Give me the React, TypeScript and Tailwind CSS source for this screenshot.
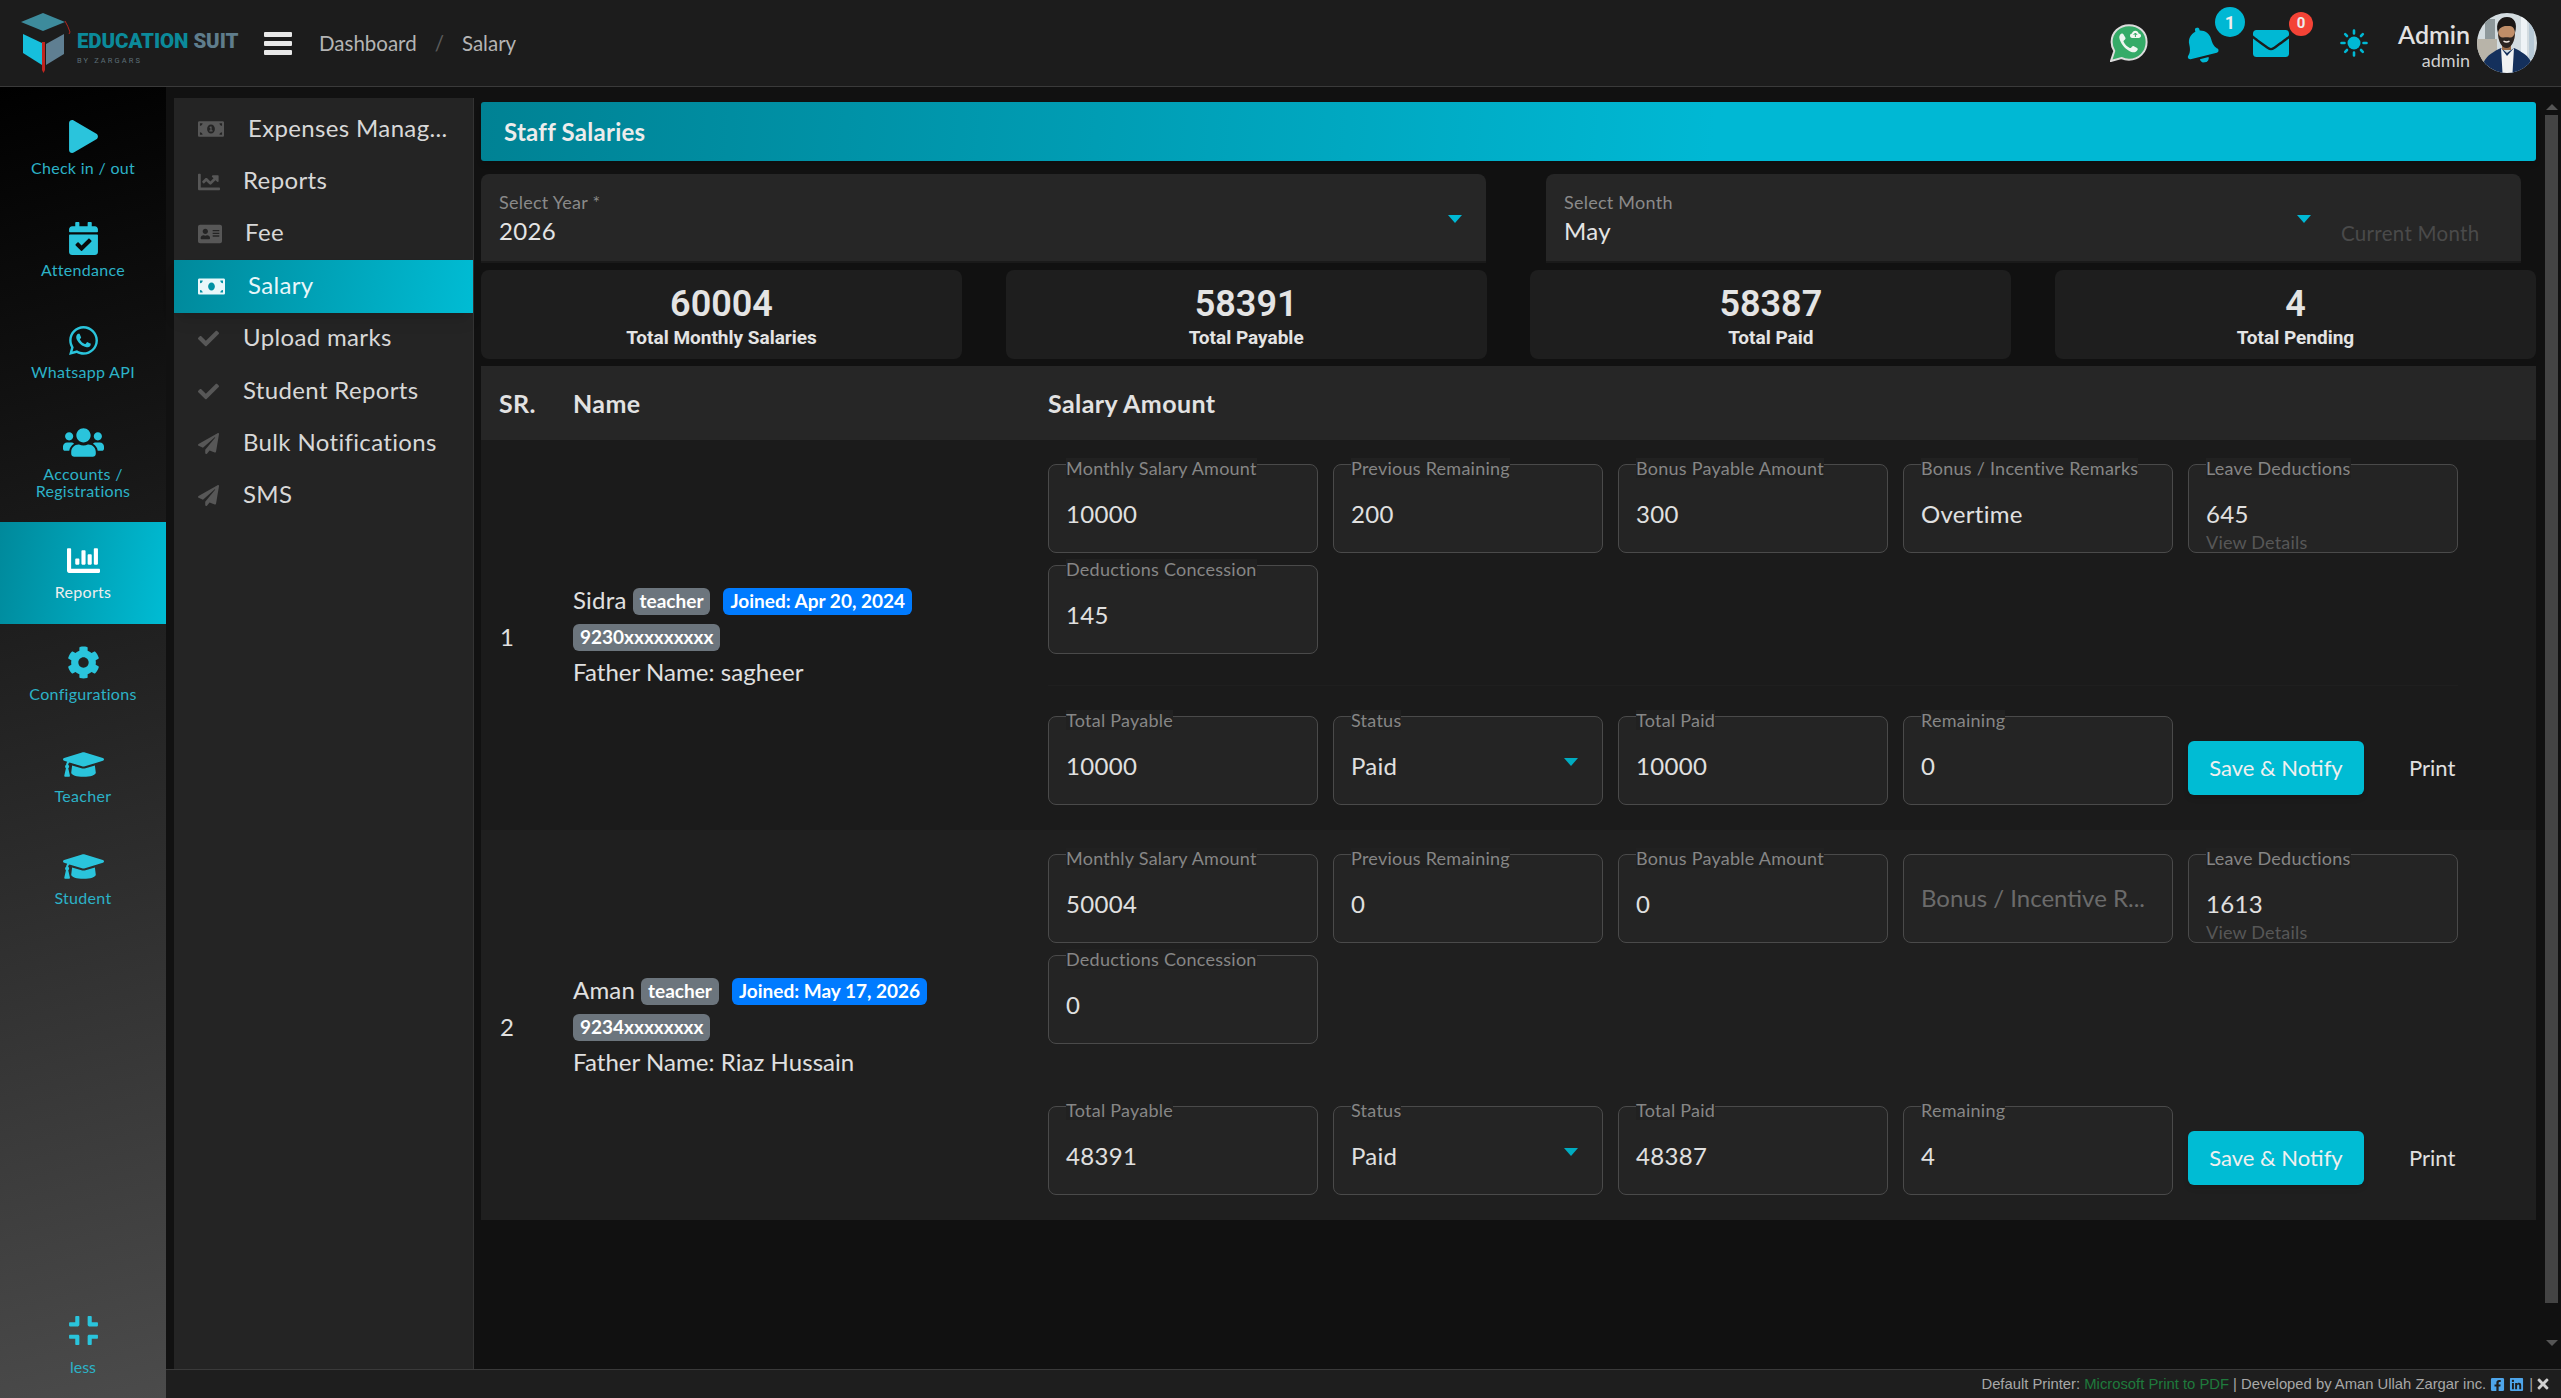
import React from "react";
import {
  FaPlay, FaCalendarCheck, FaWhatsapp, FaUsers, FaChartBar, FaCog, FaGraduationCap, FaCompress,
  FaMoneyBillAlt, FaChartLine, FaAddressCard, FaMoneyBill, FaCheck, FaPaperPlane, FaBell, FaEnvelope,
  FaFacebookSquare, FaLinkedin, FaTimes,
} from "react-icons/fa";

const Logo = () => (
  <svg width="50" height="60" viewBox="0 0 50 60" className="shrink-0">
    <path d="M0 9 L22 0 L44 9 L22 18 Z" fill="#3d8b9c" />
    <path d="M44 8 Q47 13 49 19 L48 21" stroke="#b5261e" strokeWidth="1" fill="none" />
    <path d="M2 21 L21 30 L21 52 L2 40 Z" fill="#16bfdc" />
    <path d="M25 31 L43 21 L43 41 L25 52 Z" fill="#5f7f92" />
    <path d="M21 29 L24 29 L24 57 L22.500 60 L21 57 Z" fill="#c0241f" />
  </svg>
);

const Sun = () => (
  <svg width="28" height="28" viewBox="0 0 28 28" fill="#00b8d4">
    <circle cx="14" cy="14" r="6.5" />
    <g stroke="#00b8d4" strokeWidth="2.6" strokeLinecap="round">
      <path d="M14 1.5V4.5M14 23.5V26.5M1.5 14H4.5M23.5 14H26.5M5.2 5.2L7 7M21 21L22.8 22.8M5.2 22.8L7 21M21 7L22.8 5.2" />
    </g>
  </svg>
);

const Whats = () => (
  <svg width="38" height="38" viewBox="0 0 38 38">
    <path d="M19 1.2C9.2 1.2 1.6 8.6 1.6 18c0 3.3 1 6.4 2.7 9L1 37l10.4-3c2.3 1.1 4.8 1.7 7.6 1.7 9.8 0 17.6-7.6 17.6-17.7S28.8 1.2 19 1.2Z" fill="#35ab68" stroke="#dcdcdc" strokeWidth="2" />
    <path d="M11.5 9.5c-2 1.3-2.7 3.3-1.8 6 2 5.6 6 10 11.6 12.4 2.6 1 4.8.4 6.2-1.8.5-.8.3-1.5-.4-2l-3.2-1.9c-.7-.4-1.3-.3-1.8.3l-1 1.2c-.4.4-.8.5-1.3.2-2.8-1.4-4.8-3.4-6.2-6.2-.2-.5-.1-.9.3-1.3l1.1-1c.6-.5.7-1.1.3-1.8l-1.9-3.4c-.5-.7-1.2-.9-1.9-.5Z" fill="#eef5f0" />
    <path d="M20 11.5c0-1.3 1-2.1 2-2.1.4-1.6 1.7-2.6 3.2-2.6 1.8 0 3.2 1.2 3.5 2.8 1.3.1 2.3 1 2.3 2.2 0 1.3-1 2.2-2.3 2.2h-6.5c-1.4 0-2.2-1-2.2-2.5Z" fill="#f2f7f3" />
    <path d="M25.4 9v4M23.6 11l1.8-2 1.8 2" stroke="#35ab68" strokeWidth="1" fill="none" />
  </svg>
);

const Avatar = () => (
  <svg width="60" height="60" viewBox="0 0 60 60" className="rounded-full shrink-0">
    <rect width="60" height="60" fill="#d3dce0" />
    <rect x="0" y="26" width="20" height="34" fill="#b8b4a9" />
    <rect x="8" y="6" width="10" height="20" fill="#8e999c" />
    <rect x="44" y="0" width="6" height="46" fill="#eef3f6" />
    <rect x="52" y="0" width="5" height="46" fill="#b7c9d6" />
    <path d="M5 60C5 48 9 42 24 35L30 40L37 35C52 42 56 48 56 60Z" fill="#14305c" />
    <path d="M24 35L30 43L37 35L35.500 60H25.500Z" fill="#f0f2f3" />
    <rect x="25" y="28" width="9" height="9" fill="#9a6d4a" />
    <ellipse cx="29.500" cy="20" rx="8.500" ry="13" fill="#c08e68" />
    <path d="M21 19C21 29 25 35 29.500 35C34 35 38 29 38 19C37 23.500 35 25 32.500 24.500C30.500 24 28.500 24 26.500 24.500C24 25 22 23.500 21 19Z" fill="#2b2420" />
    <path d="M26.500 28.200C28.500 29.300 30.500 29.300 32.500 28.200" stroke="#efe7e0" strokeWidth="1.400" fill="none" />
    <path d="M21 20C18 10 23 4 30 4C37 4 41 10 38 20C37.500 14 35 12.500 29.500 13C25 13 22 15 21 20Z" fill="#1b1715" />
  </svg>
);

const sideItems = [
  { label: "Check in / out", icon: <FaPlay size={33} />, h: "h-[102px]" },
  { label: "Attendance", icon: <FaCalendarCheck size={33} />, h: "h-[102px]" },
  { label: "Whatsapp API", icon: <FaWhatsapp size={33} />, h: "h-[102px]" },
  { label: "Accounts /\nRegistrations", icon: <FaUsers size={41} />, h: "h-[118px]" },
  { label: "Reports", icon: <FaChartBar size={33} />, h: "h-[102px]", active: true },
  { label: "Configurations", icon: <FaCog size={33} />, h: "h-[102px]" },
  { label: "Teacher", icon: <FaGraduationCap size={41} />, h: "h-[102px]" },
  { label: "Student", icon: <FaGraduationCap size={41} />, h: "h-[102px]" },
];

const subItems = [
  { label: "Expenses Manag...", icon: <FaMoneyBillAlt size={26} />, w: "w-[50px]" },
  { label: "Reports", icon: <FaChartLine size={22} />, w: "w-[45px]" },
  { label: "Fee", icon: <FaAddressCard size={24} />, w: "w-[47px]" },
  { label: "Salary", icon: <FaMoneyBill size={27} />, w: "w-[50px]", active: true },
  { label: "Upload marks", icon: <FaCheck size={21} />, w: "w-[45px]" },
  { label: "Student Reports", icon: <FaCheck size={21} />, w: "w-[45px]" },
  { label: "Bulk Notifications", icon: <FaPaperPlane size={21} />, w: "w-[45px]" },
  { label: "SMS", icon: <FaPaperPlane size={21} />, w: "w-[45px]" },
];

const Field = ({ label, value, muted, select, details }: { label: string; value: string; muted?: boolean; select?: boolean; details?: boolean }) => (
  <div className="relative h-[89px] rounded-lg border border-[#4a4a4a] bg-[#242424] pl-[17px] flex">
    <span className="absolute left-[17px] top-[-7px] h-[20px] bg-[#212121] text-[18px] leading-[20px] text-[#868686] whitespace-nowrap tracking-[0.25px]">{label}</span>
    {muted ? (
      <span className="mt-[27px] text-[24px] leading-[32px] text-[#6b6b6b]">{value}</span>
    ) : (
      <span className="mt-[33px] text-[24px] leading-[32px] text-[#e0e0e0] tracking-[0.3px]">{value}</span>
    )}
    {select && <span className="absolute right-[24px] top-[41px] w-0 h-0 border-l-[7px] border-r-[7px] border-t-[8px] border-l-transparent border-r-transparent border-t-[#00acc1]" />}
    {details && <span className="absolute left-[17px] bottom-[-1px] text-[18px] leading-[22px] text-[#575757] tracking-[0.2px]">View Details</span>}
  </div>
);

const Badge = ({ text, color, extra }: { text: string; color: string; extra?: string }) => (
  <span className={`inline-flex h-[27px] items-center rounded-md px-[7px] text-[19px] font-bold text-white whitespace-nowrap ${color} ${extra ?? ""}`}>{text}</span>
);

const Row = ({ sr, name, joined, phone, father, f, bg }: { sr: string; name: string; joined: string; phone: string; father: string; f: string[]; bg: string }) => (
  <div className={`flex h-[390px] ${bg}`}>
    <div className="w-[92px] pl-[19px] flex items-center text-[24px] text-[#e0e0e0] pt-[4px]">{sr}</div>
    <div className="w-[475px] flex flex-col justify-center pt-[6px] text-[24px] text-[#e0e0e0]">
      <div className="flex items-center h-[27px]">
        <span className="mr-[6px] pb-[3px] tracking-[0.2px]">{name}</span>
        <Badge text="teacher" color="bg-[#6c757d]" />
        <Badge text={joined} color="bg-[#007bff]" extra="ml-[13px]" />
      </div>
      <div className="flex mt-[9px]"><Badge text={phone} color="bg-[#6c757d]" /></div>
      <div className="mt-[5px] leading-[32px] tracking-[0.05px]">Father Name: {father}</div>
    </div>
    <div className="flex-1 pt-[24px] pr-[78.5px]">
      <div className="grid grid-cols-5 gap-x-[15.5px] gap-y-[12px] pb-[31px] border-b border-[#1f1f1f]">
        <Field label="Monthly Salary Amount" value={f[0]} />
        <Field label="Previous Remaining" value={f[1]} />
        <Field label="Bonus Payable Amount" value={f[2]} />
        {f[3] === "" ? <Field label="" value="Bonus / Incentive R..." muted /> : <Field label="Bonus / Incentive Remarks" value={f[3]} />}
        <Field label="Leave Deductions" value={f[4]} details />
        <Field label="Deductions Concession" value={f[5]} />
      </div>
      <div className="grid grid-cols-5 gap-x-[15.5px] pt-[30px]">
        <Field label="Total Payable" value={f[6]} />
        <Field label="Status" value="Paid" select />
        <Field label="Total Paid" value={f[7]} />
        <Field label="Remaining" value={f[8]} />
        <div className="flex items-center mt-[25px] h-[54px]">
          <button className="w-[176px] h-[54px] pb-[2px] rounded-md bg-[#00bcd4] text-[22px] text-[#f0f0f0] shadow-md">Save &amp; Notify</button>
          <span className="ml-[45px] pb-[2px] text-[22px] text-[#e0e0e0]">Print</span>
        </div>
      </div>
    </div>
  </div>
);

const Stat = ({ n, label }: { n: string; label: string }) => (
  <div className="w-[481px] h-[89px] rounded-lg bg-[#1e1e1e] flex flex-col items-center [font-family:Roboto,sans-serif] text-[#e4e4e4]">
    <span className="mt-[14px] text-[36px] leading-[40px] font-semibold">{n}</span>
    <span className="mt-[2px] text-[19px] leading-[24px] font-bold">{label}</span>
  </div>
);

const SelectCard = ({ w, label, value, caretGap, children }: { w: string; label: string; value: string; caretGap: string; children?: React.ReactNode }) => (
  <div className={`${w} h-[89px] rounded-t-lg bg-[#262626] border-b-[2px] border-[#1a1a1a] flex pl-[18px]`}>
    <div className="flex flex-col flex-1">
      <span className="mt-[17px] text-[18px] leading-[22px] text-[#8a8a8a] tracking-[0.25px]">{label}</span>
      <span className="mt-[2px] text-[24px] leading-[32px] text-[#e4e4e4] tracking-[0.3px]">{value}</span>
    </div>
    <span className={`mt-[41px] w-0 h-0 border-l-[7px] border-r-[7px] border-t-[8px] border-l-transparent border-r-transparent border-t-[#00b8d4] ${caretGap}`} />
    {children}
  </div>
);

export default function App() {
  return (
    <div className="h-screen w-full flex flex-col overflow-hidden bg-[#111111] [font-family:Lato,sans-serif]">
      <header className="h-[87px] shrink-0 flex items-center bg-[#1c1c1c] border-b border-[#3a3a3a] pl-[21px]">
        <Logo />
        <div className="ml-[6px] w-[187px] flex flex-col [font-family:Roboto,sans-serif] pt-[9px]">
          <span className="text-[20.5px] leading-[24px] font-black whitespace-nowrap tracking-[-0.1px]"><span className="text-[#0b8a9a]">EDUCATION</span> <span className="text-[#5f7d8c]">SUIT</span></span>
          <span className="text-[7.5px] leading-[10px] tracking-[2.1px] text-[#5d6f78] mt-[3px]">BY ZARGARS</span>
        </div>
        <div className="w-[28px] flex flex-col gap-[4px]">
          <span className="h-[5px] rounded-[1px] bg-[#e8e8e8]" />
          <span className="h-[5px] rounded-[1px] bg-[#e8e8e8]" />
          <span className="h-[5px] rounded-[1px] bg-[#e8e8e8]" />
        </div>
        <nav className="ml-[27px] flex items-center text-[20.5px] text-[#b4b4b4]">
          <span>Dashboard</span>
          <span className="ml-[18px] text-[#5c5c5c]">/</span>
          <span className="ml-[18px]">Salary</span>
        </nav>
        <div className="ml-auto flex items-center pr-[24px]">
          <Whats />
          <div className="relative ml-[35px] w-[32px] h-[36px] mt-[4px] text-[#00b8d4]">
            <FaBell size={36} className="-rotate-[14deg]" />
            <span className="absolute left-[32px] top-[-20px] w-[30px] h-[30px] rounded-full bg-[#00b8d4] flex items-center justify-center text-[18px] font-bold text-[#eeeeee] [font-family:Roboto,sans-serif]">1</span>
          </div>
          <div className="relative ml-[38px] w-[36px] text-[#00b8d4] flex">
            <FaEnvelope size={37} />
            <span className="absolute left-[36px] top-[-13px] w-[24px] h-[24px] rounded-full bg-[#f44336] flex items-center justify-center text-[15px] font-bold text-[#eeeeee] [font-family:Roboto,sans-serif]">0</span>
          </div>
          <div className="ml-[51px]"><Sun /></div>
          <div className="ml-[30px] flex flex-col items-end mr-[7px]">
            <span className="mt-[3px] text-[25px] leading-[30px] font-semibold text-[#e2e2e2]">Admin</span>
            <span className="text-[18px] leading-[22px] text-[#d0d0d0]">admin</span>
          </div>
          <Avatar />
        </div>
      </header>

      <div className="flex-1 flex min-h-0">
        <aside className="w-[166px] shrink-0 flex flex-col pt-[11px] bg-[linear-gradient(165deg,#000000,#4b4b4b)]">
          {sideItems.map((s) => (
            <div key={s.label} className={`${s.h} flex flex-col items-center pt-[22px] ${s.active ? "bg-[linear-gradient(100deg,#00899b,#00bcd4)] text-white" : "text-[#2ac4dc]"}`}>
              <div className="h-[33px] flex items-center justify-center">{s.icon}</div>
              <span className={`mt-[6px] text-[16px] leading-[17px] text-center whitespace-pre-line tracking-[0.3px] ${s.active ? "text-[#eeeeee]" : "text-[#2cb2c7]"}`}>{s.label}</span>
            </div>
          ))}
          <div className="mt-auto flex flex-col items-center pb-[23px] text-[#2ac4dc]">
            <FaCompress size={33} />
            <span className="mt-[11px] text-[16px] leading-[17px] text-[#2cb2c7]">less</span>
          </div>
        </aside>

        <div className="flex-1 flex flex-col min-w-0">
          <div className="flex-1 flex min-h-0">
            <div className="ml-[8px] mt-[11px] w-[300px] shrink-0 bg-[#242424] border-r border-[#333333] pt-[5px]">
              {subItems.map((s) => (
                <div key={s.label} className={`h-[52.4px] flex items-center pl-[24px] ${s.active ? "bg-[linear-gradient(100deg,#00899b,#00bcd4)] shadow-lg" : ""}`}>
                  <span className={`${s.w} shrink-0 flex ${s.active ? "text-[#e8f7fa]" : "text-[#575757]"}`}>{s.icon}</span>
                  <span className={`pb-[3px] text-[24px] tracking-[0.35px] whitespace-nowrap ${s.active ? "text-[#e8f7fa]" : "text-[#d8d8d8]"}`}>{s.label}</span>
                </div>
              ))}
            </div>

            <main className="ml-[7px] w-[2055px] shrink-0 pt-[15px]">
              <div className="h-[59px] rounded-[3px] flex items-center pl-[23px] pt-[1px] bg-[linear-gradient(95deg,#008294,#00b8d4_60%)] text-[24px] font-bold tracking-[0.25px] text-[#ececec] shadow-md">Staff Salaries</div>
              <div className="mt-[13px] flex h-[89px]">
                <SelectCard w="w-[1005px]" label="Select Year *" value="2026" caretGap="mr-[24px]" />
                <SelectCard w="w-[975px] ml-[60px]" label="Select Month" value="May" caretGap="mr-[30px]">
                  <span className="w-[180px] mt-[44px] text-[20.5px] leading-[30px] text-[#4a4a4a] tracking-[0.3px]">Current Month</span>
                </SelectCard>
              </div>
              <div className="mt-[7px] flex justify-between">
                <Stat n="60004" label="Total Monthly Salaries" />
                <Stat n="58391" label="Total Payable" />
                <Stat n="58387" label="Total Paid" />
                <Stat n="4" label="Total Pending" />
              </div>
              <div className="mt-[7px] h-[74px] pt-[2px] flex items-center bg-[#262626] text-[25px] tracking-[0.4px] font-bold text-[#e2e2e2]">
                <span className="w-[92px] pl-[18px]">SR.</span>
                <span className="w-[475px]">Name</span>
                <span>Salary Amount</span>
              </div>
              <Row sr="1" name="Sidra" joined="Joined: Apr 20, 2024" phone="9230xxxxxxxxx" father="sagheer" bg="bg-[#1b1b1b]"
                f={["10000", "200", "300", "Overtime", "645", "145", "10000", "10000", "0"]} />
              <Row sr="2" name="Aman" joined="Joined: May 17, 2026" phone="9234xxxxxxxx" father="Riaz Hussain" bg="bg-[#1f1f1f]"
                f={["50004", "0", "0", "", "1613", "0", "48391", "48387", "4"]} />
            </main>

            <div className="ml-[9px] w-[13px] shrink-0 flex flex-col items-center pt-[17px]">
              <span className="w-0 h-0 border-l-[6px] border-r-[6px] border-b-[6px] border-l-transparent border-r-transparent border-b-[#555555]" />
              <div className="mt-[5px] w-[13px] h-[1188px] bg-[#444444]" />
              <span className="mt-[37px] w-0 h-0 border-l-[6px] border-r-[6px] border-t-[6px] border-l-transparent border-r-transparent border-t-[#555555]" />
            </div>
          </div>

          <footer className="h-[29px] shrink-0 flex items-center justify-end pr-[10px] bg-[#1e1e1e] border-t border-[#3a3a3a] [font-family:'Liberation_Sans',sans-serif] text-[14.8px] text-[#a8a8a8]">
            <span>Default Printer: <span className="text-[#1f7a3c]">Microsoft Print to PDF</span> | Developed by Aman Ullah Zargar inc.</span>
            <FaFacebookSquare size={15} className="ml-[4px] text-[#4ea5ea]" />
            <FaLinkedin size={15} className="ml-[4px] text-[#4ea5ea]" />
            <span className="ml-[5px]">|</span>
            <FaTimes size={16} className="ml-[2px] text-[#d0d0d0]" />
          </footer>
        </div>
      </div>
    </div>
  );
}
